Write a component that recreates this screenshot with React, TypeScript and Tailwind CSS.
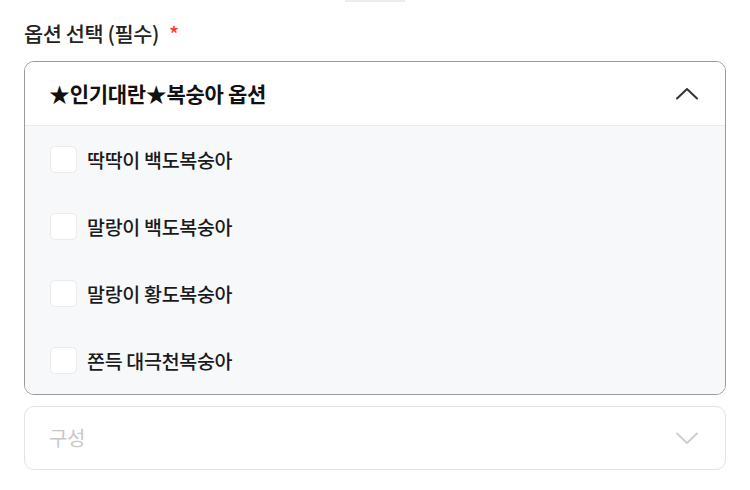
import React from "react";

const options = ["딱딱이 백도복숭아", "말랑이 백도복숭아", "말랑이 황도복숭아", "쫀득 대극천복숭아"];

function Chevron({ up, className }: { up?: boolean; className?: string }) {
  return (
    <svg width="24" height="24" viewBox="0 0 24 24" fill="none" className={className}>
      <path
        d={up ? "M2 16.5 L12 7 L22 16.5" : "M2 7.5 L12 17 L22 7.5"}
        stroke="currentColor"
        strokeWidth="2"
        strokeLinecap="round"
        strokeLinejoin="round"
      />
    </svg>
  );
}

export default function App() {
  return (
    <div
      className="w-[750px] h-[490px] bg-white overflow-hidden"
      style={{ fontFamily: '"Noto Sans CJK KR", "Noto Sans", sans-serif' }}
    >
      <div className="flex justify-center">
        <div className="w-[60px] h-[2px] bg-[#ececec]" />
      </div>
      <div className="px-6 pt-[18px]">
        <div className="flex items-center h-[28px] text-[20.8px] text-[#222] font-medium tracking-[-0.4px]">
          옵션 선택 (필수)
          <span className="ml-[10px] text-[#ff3b30]">*</span>
        </div>
        <div className="mt-[13px] border border-[#9a9a9a] rounded-[10px] overflow-hidden">
          <div className="h-[64px] flex items-center justify-between pl-6 pr-[26px] bg-white border-b border-[#ececec]">
            <span className="text-[21px] font-bold text-[#111] tracking-[-0.3px]">★인기대란★복숭아 옵션</span>
            <Chevron up className="text-[#333]" />
          </div>
          <div className="bg-[#f7f8fa]">
            {options.map((o) => (
              <div key={o} className="h-[67px] flex items-center pl-[25px]">
                <div className="w-[27px] h-[27px] rounded-[5px] bg-white border border-[#ebebeb]" />
                <span className="ml-[10px] text-[19.5px] font-medium text-[#1a1a1a] tracking-[-0.3px]">{o}</span>
              </div>
            ))}
          </div>
        </div>
        <div className="mt-[11px] h-[64px] border border-[#e3e3e3] rounded-[10px] flex items-center justify-between pl-6 pr-[26px]">
          <span className="text-[20px] text-[#c8c8c8] tracking-[-0.3px]">구성</span>
          <Chevron className="text-[#cfcfcf]" />
        </div>
      </div>
    </div>
  );
}
